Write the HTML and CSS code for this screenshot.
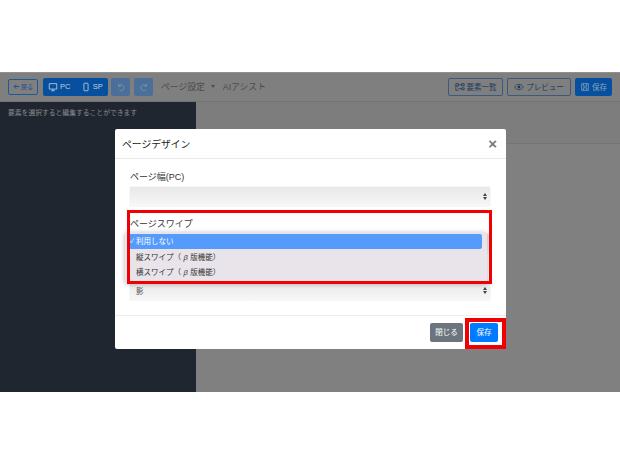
FILE: index.html
```html
<!DOCTYPE html>
<html lang="ja">
<head>
    <meta charset="UTF-8">
    <meta name="viewport" content="width=device-width, initial-scale=1.0">
    <title>ページデザイン</title>
    <link rel="stylesheet" href="styles.css">
</head>
<body>
    <div class="app">
        <header class="topbar">
            <a class="btn btn-back">
                <svg class="icon" viewBox="0 0 10 10"><path d="M9 5H2M4.5 2 1.5 5l3 3" fill="none" stroke="currentColor" stroke-width="1.4"/></svg>
                戻る
            </a>
            <div class="device-group">
                <span class="device">
                    <svg class="icon icon-lg" viewBox="0 0 12 12"><path d="M1.5 2h9v6.5h-9zM4 10.5h4M6 8.5v2" fill="none" stroke="currentColor" stroke-width="1"/></svg>
                    PC
                </span>
                <span class="device">
                    <svg class="icon icon-lg" viewBox="0 0 12 12"><rect x="3.5" y="1.5" width="5" height="9" rx="0.8" fill="none" stroke="currentColor"/></svg>
                    SP
                </span>
            </div>
            <span class="history">
                <svg class="icon icon-lg" viewBox="0 0 12 12"><path d="M3 2v3h3M3.2 5A3.5 3.5 0 1 1 4 9.6" fill="none" stroke="currentColor" stroke-width="1.1"/></svg>
            </span>
            <span class="history">
                <svg class="icon icon-lg" viewBox="0 0 12 12"><path d="M9 2v3H6M8.8 5A3.5 3.5 0 1 0 8 9.6" fill="none" stroke="currentColor" stroke-width="1.1"/></svg>
            </span>
            <nav class="menu">
                <span>ページ設定</span>
                <span class="caret"></span>
                <span class="menu-ai">AIアシスト</span>
            </nav>
            <div class="actions">
                <a class="btn btn-outline btn-list">
                    <svg class="icon icon-lg" viewBox="0 0 12 12"><path d="M1 2h3v3H1zM1 5v5h3M8 2h3v2.500H8zM8 7h3v2.500H8zM4 3.500h4M4 8h4" fill="none" stroke="currentColor" stroke-width="0.9"/></svg>
                    要素一覧
                </a>
                <a class="btn btn-outline btn-preview">
                    <svg class="icon icon-lg" viewBox="0 0 12 12"><path d="M.8 6C2.500 3.500 4 2.800 6 2.800S9.500 3.500 11.200 6C9.500 8.500 8 9.200 6 9.200S2.500 8.500.8 6z" fill="none" stroke="currentColor" stroke-width="0.9"/><circle cx="6" cy="6" r="1.700" fill="currentColor"/></svg>
                    プレビュー
                </a>
                <a class="btn btn-save">
                    <svg class="icon icon-lg" viewBox="0 0 12 12"><path d="M2 2h8v8H2zM4 2v3h4V2M4 10V7h4v3" fill="none" stroke="currentColor" stroke-width="0.9"/></svg>
                    保存
                </a>
            </div>
        </header>
        <div class="workspace">
            <aside class="sidebar">要素を選択すると編集することができます</aside>
            <main class="canvas">
                <div class="canvas-band"></div>
            </main>
        </div>
    </div>

    <div class="modal">
        <div class="modal-header">
            <h5>ページデザイン</h5>
            <span class="modal-close">×</span>
        </div>
        <div class="modal-body">
            <div class="form-group">
                <label>ページ幅(PC)</label>
                <div class="select-box"><span class="arrows"></span></div>
            </div>
            <div class="form-group">
                <label>ページスワイプ</label>
                <div class="select-box"><span class="arrows"></span></div>
            </div>
            <div class="form-group form-group-last">
                <div class="select-box">影<span class="arrows"></span></div>
            </div>
        </div>
        <div class="modal-footer">
            <a class="btn-close">閉じる</a>
            <a class="btn-primary">保存</a>
        </div>

        <ul class="dropdown">
            <li class="selected"><span class="check">✓</span>利用しない</li>
            <li>縦スワイプ（<span class="beta">β</span>版機能）</li>
            <li>横スワイプ（<span class="beta">β</span>版機能）</li>
        </ul>
        <div class="mark mark-select"></div>
        <div class="mark mark-save"></div>
    </div>
</body>
</html>
```

FILE: styles.css
```css
body {
    font-family: "Liberation Sans", "Noto Sans CJK JP", sans-serif;
    margin: 0;
    background-color: #fff;
    height: 465px;
    overflow: hidden;
    position: relative;
}

.app {
    margin-top: 72px;
    height: 320px;
    display: flex;
    flex-direction: column;
    background-color: #808080;
}

.topbar {
    height: 30px;
    box-sizing: border-box;
    padding: 5px 8px 6px;
    display: flex;
    align-items: center;
    border-top: 1px solid #909090;
    border-bottom: 1px solid #727272;
    background-color: #7f7f7f;
}

.icon {
    width: 7px;
    height: 7px;
    flex: none;
}

.icon-lg {
    width: 10px;
    height: 10px;
}

.btn {
    display: flex;
    align-items: center;
    justify-content: center;
    gap: 2px;
    height: 18px;
    box-sizing: border-box;
    border-radius: 2px;
    font-size: 7px;
}

.btn-back {
    width: 30px;
    height: 16px;
    border: 1px solid #1d5a9b;
    color: #15508f;
    gap: 1px;
    font-size: 6px;
}

.device-group {
    margin-left: 5px;
    width: 65px;
    height: 18px;
    display: flex;
    background-color: #06509f;
    border-radius: 2px;
    color: #c5cfdc;
    font-size: 7.5px;
}

.device {
    flex: 1;
    display: flex;
    align-items: center;
    justify-content: center;
    gap: 2px;
}

.history {
    margin-left: 3px;
    width: 19px;
    height: 18px;
    display: flex;
    align-items: center;
    justify-content: center;
    background-color: #4a6f9b;
    border-radius: 2px;
    color: #80909f;
}

.history + .history {
    margin-left: 4px;
}

.menu {
    margin-left: 8px;
    display: flex;
    align-items: center;
    font-size: 8.8px;
    color: #4c4c4c;
}

.caret {
    margin-left: 6px;
    border-top: 3px solid #4c4c4c;
    border-left: 2.500px solid transparent;
    border-right: 2.500px solid transparent;
}

.menu-ai {
    margin-left: 8px;
}

.actions {
    margin-left: auto;
    display: flex;
    gap: 4px;
}

.btn-outline {
    border: 1px solid #3c5a7c;
    color: #17395f;
    font-size: 7.500px;
}

.btn-list {
    width: 55px;
}

.btn-preview {
    width: 64px;
}

.btn-save {
    width: 37px;
    background-color: #06509f;
    color: #8ca3bd;
    font-size: 7.500px;
}

.workspace {
    flex: 1;
    display: flex;
}

.sidebar {
    width: 196px;
    box-sizing: border-box;
    padding: 6px 8px;
    background-color: #1f2630;
    color: #87898d;
    font-size: 6.800px;
    line-height: 10px;
}

.canvas {
    flex: 1;
}

.canvas-band {
    height: 41px;
    background-color: #7d7d7d;
    border-bottom: 1px solid #757575;
}

/* モーダル */
.modal {
    position: absolute;
    left: 115px;
    top: 129px;
    width: 391px;
    height: 220px;
    display: flex;
    flex-direction: column;
    background-color: #fff;
    border-radius: 2px;
}

.modal-header {
    height: 30px;
    box-sizing: border-box;
    padding: 0 8px 0 7px;
    display: flex;
    align-items: center;
    justify-content: space-between;
    border-bottom: 1px solid #e9e9e9;
}

.modal-header h5 {
    margin: 0;
    font-size: 9.800px;
    font-weight: normal;
    color: #222;
}

.modal-close {
    font-size: 15px;
    font-weight: bold;
    color: #777;
    margin-right: 1px;
}

.modal-body {
    flex: 1;
    padding: 11px 16px 0 15px;
}

.form-group {
    margin-bottom: 11px;
}

.form-group-last {
    padding-top: 17px;
}

.form-group label {
    display: block;
    height: 14px;
    line-height: 14px;
    margin-bottom: 3px;
    font-size: 9px;
    color: #333;
}

.select-box {
    height: 19px;
    box-sizing: border-box;
    padding-left: 6px;
    display: flex;
    align-items: center;
    background: linear-gradient(#e8e8e8, #f7f7f7);
    border-radius: 2px;
    box-shadow: 0 0 1px #a8a8a8;
    font-size: 7.500px;
    color: #555;
}

.arrows {
    margin-left: auto;
    margin-right: 3px;
    display: flex;
    flex-direction: column;
    gap: 1px;
}

.arrows::before, .arrows::after {
    content: "";
    border-left: 2px solid transparent;
    border-right: 2px solid transparent;
}

.arrows::before {
    border-bottom: 3px solid #444;
}

.arrows::after {
    border-top: 3px solid #444;
}

.modal-footer {
    height: 34px;
    box-sizing: border-box;
    padding: 7px 8px 0 0;
    display: flex;
    justify-content: flex-end;
    gap: 7px;
    border-top: 1px solid #ececec;
}

.btn-close, .btn-primary {
    height: 19px;
    line-height: 19px;
    text-align: center;
    border-radius: 2px;
    color: #fff;
    font-size: 7.500px;
}

.btn-close {
    width: 33px;
    background-color: #6c757d;
}

.btn-primary {
    width: 28px;
    background-color: #007bff;
}

.dropdown {
    position: absolute;
    left: 10px;
    top: 103px;
    width: 362px;
    height: 51px;
    box-sizing: border-box;
    margin: 0;
    padding: 2px 5px 0 2px;
    list-style: none;
    background-color: #e8e4e9;
    box-shadow: 0 1px 5px rgba(0, 0, 0, 0.3);
    border-radius: 3px;
    font-size: 7.500px;
    color: #333;
}

.dropdown li {
    position: relative;
    height: 15px;
    line-height: 15px;
    padding-left: 9px;
}

.dropdown .selected {
    margin-bottom: 1px;
    background-color: #559bfb;
    border-radius: 2px;
    color: #fff;
}

.check {
    position: absolute;
    left: 3px;
    font-size: 6px;
}

.beta {
    padding: 0 2.500px;
    font-style: italic;
}

.mark {
    position: absolute;
    box-sizing: border-box;
    border-style: solid;
    border-color: #f00000;
}

.mark-select {
    left: 12px;
    top: 81px;
    width: 365px;
    height: 74px;
    border-width: 3px;
}

.mark-save {
    left: 350px;
    top: 189px;
    width: 41px;
    height: 31px;
    border-width: 4px;
}
```
